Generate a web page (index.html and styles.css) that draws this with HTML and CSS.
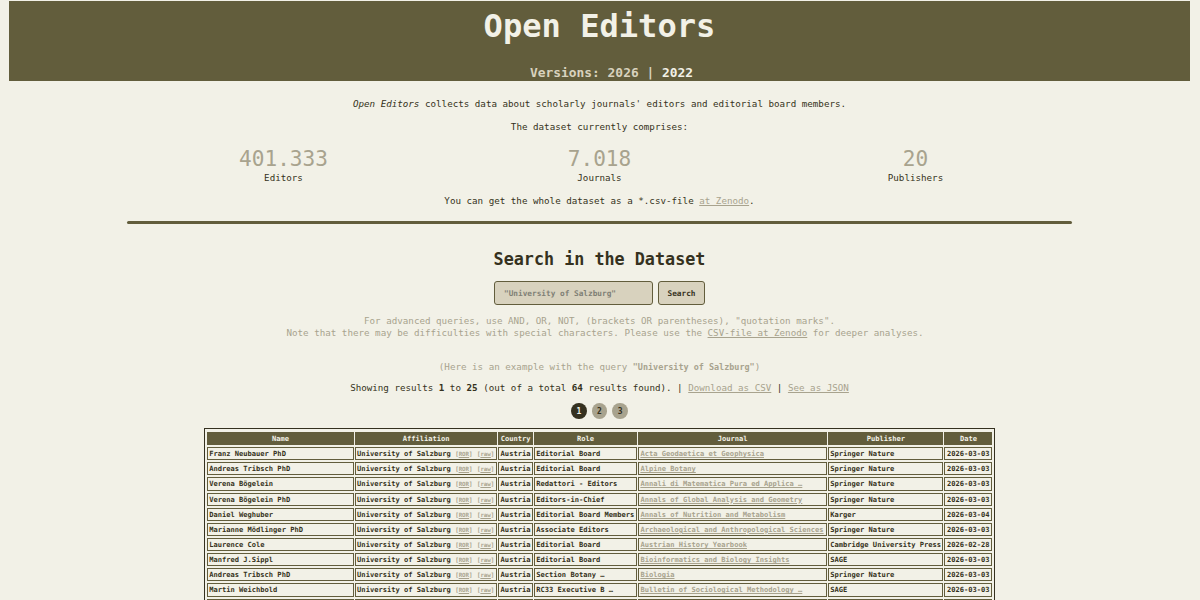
FILE: index.html
```
<!DOCTYPE html>
<html lang="en">
<head>
    <meta charset="utf-8">
    <title>Open Editors</title>
    <link rel="stylesheet" href="styles.css">
</head>
<body>
    <header>
        <h1>Open Editors</h1>
        <div class="versions">Versions: 2026 | <a href="#">2022</a></div>
    </header>

    <p class="intro"><i>Open Editors</i> collects data about scholarly journals' editors and editorial board members.</p>
    <p class="intro">The dataset currently comprises:</p>

    <div class="stats">
        <div><span class="number">401.333</span>Editors</div>
        <div><span class="number">7.018</span>Journals</div>
        <div><span class="number">20</span>Publishers</div>
    </div>

    <p class="zenodo">You can get the whole dataset as a *.csv-file <a href="#">at Zenodo</a>.</p>
    <hr>

    <h2>Search in the Dataset</h2>
    <form class="search">
        <input type="text" placeholder='"University of Salzburg"'>
        <button type="button">Search</button>
    </form>

    <p class="note">For advanced queries, use AND, OR, NOT, (brackets OR parentheses), "quotation marks".<br>
    &nbsp;&nbsp;Note that there may be difficulties with special characters. Please use the <a href="#">CSV-file at Zenodo</a> for deeper analyses.</p>
    <p class="example">(Here is an example with the query <b>"University of Salzburg"</b>)</p>
    <p class="showing">Showing results <b>1</b> to <b>25</b> (out of a total <b>64</b> results found). | <a href="#">Download as CSV</a> | <a href="#">See as JSON</a></p>

    <div class="pages">
        <a href="#" class="current">1</a>
        <a href="#">2</a>
        <a href="#">3</a>
    </div>

    <table>
        <colgroup>
            <col class="c-name"><col class="c-affiliation"><col class="c-country"><col class="c-role"><col class="c-journal"><col class="c-publisher"><col class="c-date">
        </colgroup>
        <tr><th>Name</th><th>Affiliation</th><th>Country</th><th>Role</th><th>Journal</th><th>Publisher</th><th>Date</th></tr>
        <tr><td>Franz Neubauer PhD</td><td>University of Salzburg <small>[<a href="#">ROR</a>]</small> <small>[<a href="#">raw</a>]</small></td><td>Austria</td><td>Editorial Board</td><td><a href="#">Acta Geodaetica et Geophysica</a></td><td>Springer Nature</td><td>2026-03-03</td></tr>
        <tr><td>Andreas Tribsch PhD</td><td>University of Salzburg <small>[<a href="#">ROR</a>]</small> <small>[<a href="#">raw</a>]</small></td><td>Austria</td><td>Editorial Board</td><td><a href="#">Alpine Botany</a></td><td>Springer Nature</td><td>2026-03-03</td></tr>
        <tr><td>Verena Bögelein</td><td>University of Salzburg <small>[<a href="#">ROR</a>]</small> <small>[<a href="#">raw</a>]</small></td><td>Austria</td><td>Redattori - Editors</td><td><a href="#">Annali di Matematica Pura ed Applica …</a></td><td>Springer Nature</td><td>2026-03-03</td></tr>
        <tr><td>Verena Bögelein PhD</td><td>University of Salzburg <small>[<a href="#">ROR</a>]</small> <small>[<a href="#">raw</a>]</small></td><td>Austria</td><td>Editors-in-Chief</td><td><a href="#">Annals of Global Analysis and Geometry</a></td><td>Springer Nature</td><td>2026-03-03</td></tr>
        <tr><td>Daniel Weghuber</td><td>University of Salzburg <small>[<a href="#">ROR</a>]</small> <small>[<a href="#">raw</a>]</small></td><td>Austria</td><td>Editorial Board Members</td><td><a href="#">Annals of Nutrition and Metabolism</a></td><td>Karger</td><td>2026-03-04</td></tr>
        <tr><td>Marianne Mödlinger PhD</td><td>University of Salzburg <small>[<a href="#">ROR</a>]</small> <small>[<a href="#">raw</a>]</small></td><td>Austria</td><td>Associate Editors</td><td><a href="#">Archaeological and Anthropological Sciences</a></td><td>Springer Nature</td><td>2026-03-03</td></tr>
        <tr><td>Laurence Cole</td><td>University of Salzburg <small>[<a href="#">ROR</a>]</small> <small>[<a href="#">raw</a>]</small></td><td>Austria</td><td>Editorial Board</td><td><a href="#">Austrian History Yearbook</a></td><td>Cambridge University Press</td><td>2026-02-28</td></tr>
        <tr><td>Manfred J.Sippl</td><td>University of Salzburg <small>[<a href="#">ROR</a>]</small> <small>[<a href="#">raw</a>]</small></td><td>Austria</td><td>Editorial Board</td><td><a href="#">Bioinformatics and Biology Insights</a></td><td>SAGE</td><td>2026-03-03</td></tr>
        <tr><td>Andreas Tribsch PhD</td><td>University of Salzburg <small>[<a href="#">ROR</a>]</small> <small>[<a href="#">raw</a>]</small></td><td>Austria</td><td>Section Botany …</td><td><a href="#">Biologia</a></td><td>Springer Nature</td><td>2026-03-03</td></tr>
        <tr><td>Martin Weichbold</td><td>University of Salzburg <small>[<a href="#">ROR</a>]</small> <small>[<a href="#">raw</a>]</small></td><td>Austria</td><td>RC33 Executive B …</td><td><a href="#">Bulletin of Sociological Methodology …</a></td><td>SAGE</td><td>2026-03-03</td></tr>
        <tr><td></td><td></td><td></td><td></td><td></td><td></td><td></td></tr>
    </table>
</body>
</html>
```

FILE: styles.css
```
html{
    height: 100%;
    overflow: hidden;
    background-color: #f2f1e7;
}

body{
    margin: 0 10px 0 9px;
    padding-top: 1px;
    color: #353120;
    font-family: "DejaVu Sans Mono", "Liberation Mono", monospace;
    font-size: 9.21px;
    line-height: 12px;
    text-align: center;
}

h1, h2, p{
    margin: 0;
}

a{
    color: #a8a38e;
}

header{
    height: 80px;
    overflow: hidden;
    background-color: #625d3c;
    color: #f2f1e7;
}

h1{
    font-size: 32.1px;
    line-height: 50px;
}

.versions{
    margin-top: 12px;
    padding-left: 24px;
    font-size: 12.9px;
    line-height: 20px;
    font-weight: bold;
    color: #d8d2be;
}

.versions a{
    color: #f2f1e7;
    text-decoration: none;
}

.intro{
    margin-top: 17px;
}

.intro + .intro{
    margin-top: 11px;
}

.stats{
    display: grid;
    grid-template-columns: repeat(3, 316px);
    justify-content: center;
    margin-top: 13px;
}

.number{
    display: block;
    font-size: 21.1px;
    line-height: 26px;
    color: #a8a38e;
}

.zenodo{
    margin-top: 11px;
}

hr{
    width: 945px;
    height: 3px;
    margin: 14px auto 0;
    border: none;
    border-radius: 2px;
    background-color: #625d3c;
}

h2{
    margin-top: 23px;
    font-size: 16.75px;
    line-height: 24px;
}

.search{
    display: flex;
    justify-content: center;
    gap: 5px;
    margin-top: 10px;
}

.search input, .search button{
    box-sizing: border-box;
    height: 24px;
    margin: 0;
    border: 1px solid #625d3c;
    border-radius: 3px;
    background-color: #d8d2be;
    color: #353120;
    font-family: inherit;
    font-size: 7.75px;
    font-weight: bold;
}

.search input{
    width: 159px;
    padding: 0 9px;
}

.search input::placeholder{
    color: #7f7f75;
}

.search button{
    width: 47px;
    padding: 0;
}

.note{
    margin-top: 10px;
    color: #a8a38e;
    line-height: 11.5px;
}

.example{
    margin-top: 23px;
    color: #a8a38e;
}

.example b{
    font-size: 8.45px;
}

.showing{
    margin-top: 9px;
}

.pages{
    display: flex;
    justify-content: center;
    gap: 5px;
    margin-top: 9px;
}

.pages a{
    width: 15.6px;
    height: 16px;
    border-radius: 50%;
    background-color: #a8a38e;
    color: #353120;
    font-size: 8px;
    font-weight: bold;
    line-height: 17px;
    text-decoration: none;
}

.pages .current{
    background-color: #353120;
    color: #f2f1e7;
}

table{
    table-layout: fixed;
    width: 791px;
    margin: 9px 0 0 195px;
    padding: 1px 0.7px;
    border: 1px solid #353120;
    border-spacing: 1.5px 2px;
    font-size: 7.09px;
    line-height: 10px;
    font-weight: bold;
    white-space: nowrap;
}

th, td{
    box-sizing: border-box;
    height: 13.15px;
    padding: 1px 1px 0 1.5px;
    border: 1px solid #625d3c;
    overflow: hidden;
}

th{
    background-color: #625d3c;
    color: #f2f1e7;
}

td{
    text-align: left;
}

td small{
    font-size: 5.8px;
    font-weight: bold;
    line-height: 1;
    color: #a8a38e;
}

.c-name{
    width: 146.1px;
}

.c-affiliation{
    width: 141.7px;
}

.c-country{
    width: 34.5px;
}

.c-role{
    width: 102.5px;
}

.c-journal{
    width: 187.8px;
}

.c-publisher{
    width: 115px;
}

.c-date{
    width: 47.6px;
}
```
